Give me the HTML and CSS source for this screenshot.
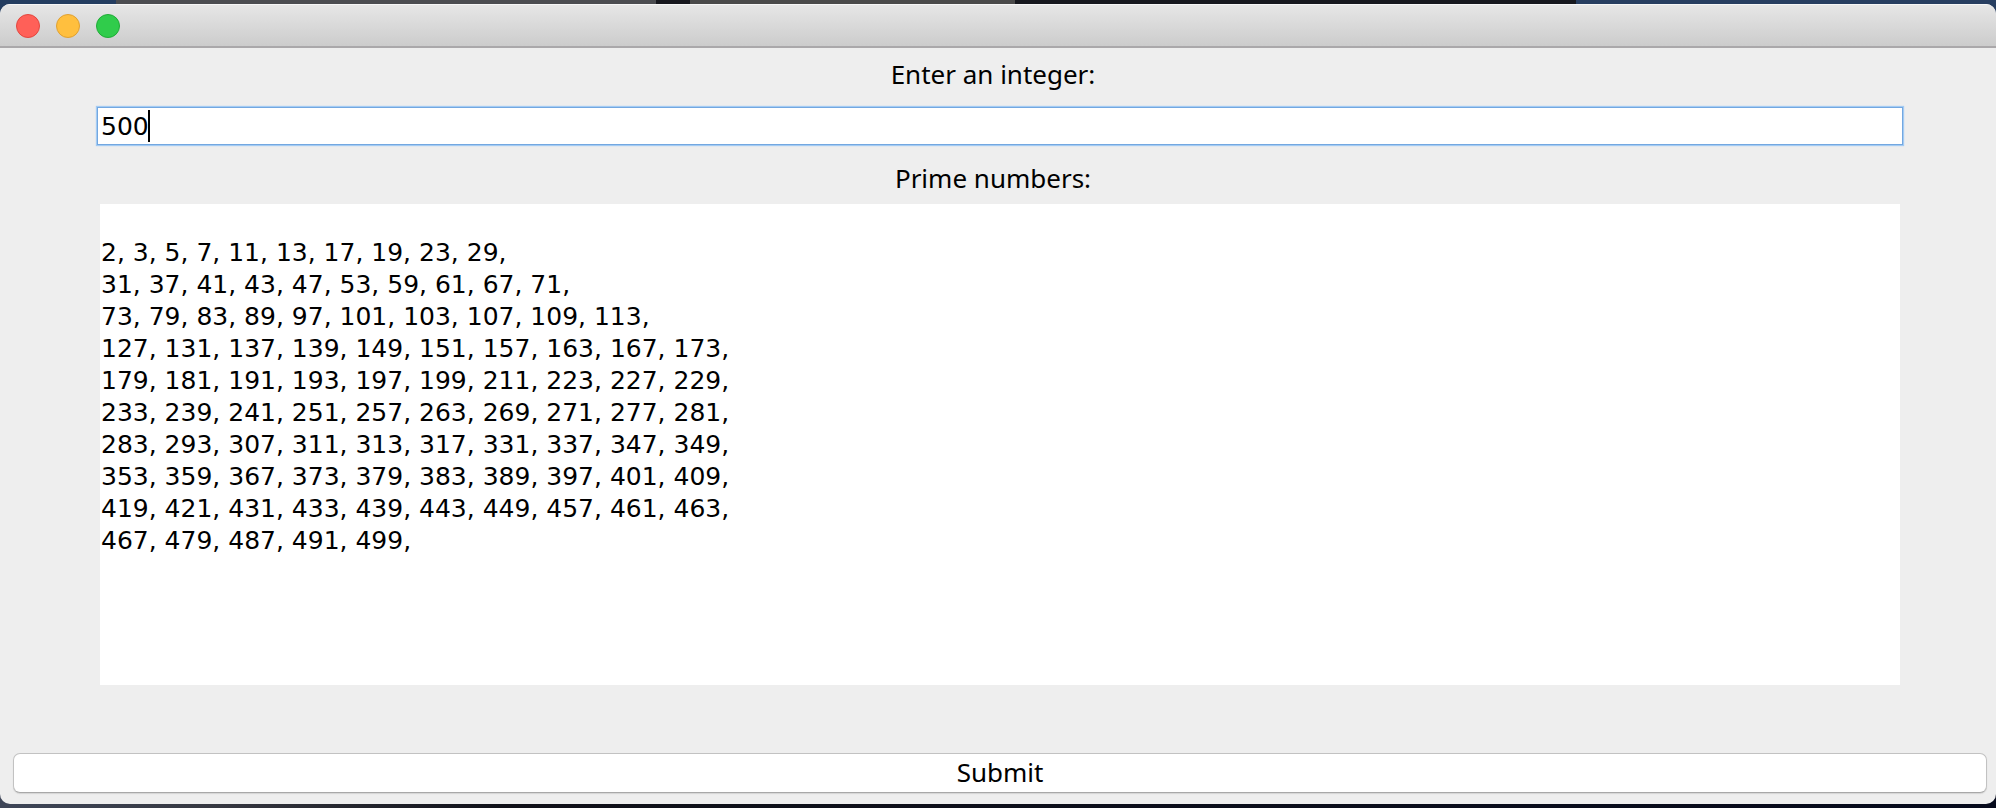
FILE: index.html
```
<!DOCTYPE html>
<html lang="en">
<head>
<meta charset="utf-8">
<title>Prime numbers</title>
<link rel="stylesheet" href="styles.css">
</head>
<body>
<main class="window">
  <header class="titlebar">
    <button class="light light-close" type="button" aria-label="Close"></button>
    <button class="light light-minimize" type="button" aria-label="Minimize"></button>
    <button class="light light-zoom" type="button" aria-label="Zoom"></button>
  </header>
  <form class="content">
    <div class="fields">
      <label class="caption" for="limit">Enter an integer:</label>
      <div class="entry">
        <input class="entry-input" id="limit" type="text" value="500">
        <span class="caret"></span>
      </div>
      <label class="caption" for="primes">Prime numbers:</label>
      <textarea class="output" id="primes" rows="15" readonly>

2, 3, 5, 7, 11, 13, 17, 19, 23, 29,
31, 37, 41, 43, 47, 53, 59, 61, 67, 71,
73, 79, 83, 89, 97, 101, 103, 107, 109, 113,
127, 131, 137, 139, 149, 151, 157, 163, 167, 173,
179, 181, 191, 193, 197, 199, 211, 223, 227, 229,
233, 239, 241, 251, 257, 263, 269, 271, 277, 281,
283, 293, 307, 311, 313, 317, 331, 337, 347, 349,
353, 359, 367, 373, 379, 383, 389, 397, 401, 409,
419, 421, 431, 433, 439, 443, 449, 457, 461, 463,
467, 479, 487, 491, 499,</textarea>
    </div>
    <button class="submit" type="button">Submit</button>
  </form>
</main>
</body>
</html>
```
FILE: styles.css
```
* {
  box-sizing: border-box;
}

body {
  margin: 0;
  min-height: 100vh;
  padding: 4px 0;
  display: flex;
  background:
    linear-gradient(90deg, #243d60 0 116px, #4b4c50 116px 656px, #16171d 656px 690px, #4a4a4a 690px 1015px, #16181e 1015px 1576px, #273e60 1576px) top / 100% 20px no-repeat,
    linear-gradient(90deg, #3e4658 0, #363841 220px, #101119 500px, #060a1c) #060a1c;
  color: #000;
  font-family: "Lucida Grande", "DejaVu Sans", sans-serif;
  font-size: 25px;
  line-height: 32px;
}

.window {
  flex: 1;
  display: flex;
  flex-direction: column;
  border-radius: 10px;
  overflow: hidden;
  background: #eeeeee;
}

.titlebar {
  display: flex;
  align-items: center;
  gap: 16px;
  height: 44px;
  padding: 0 16px;
  border-top: 1px solid #f6f6f6;
  border-bottom: 2px solid #aaa8aa;
  background: linear-gradient(#e6e6e6, #cccccc);
}

.light {
  width: 24px;
  height: 24px;
  padding: 0;
  border: 1px solid;
  border-radius: 50%;
}

.light-close {
  border-color: #e2473f;
  background: #ff6058;
}

.light-minimize {
  border-color: #dfa032;
  background: #ffbf3e;
}

.light-zoom {
  border-color: #20ab37;
  background: #30cc4b;
}

.content {
  flex: 1;
  display: flex;
  flex-direction: column;
  justify-content: space-between;
  padding: 10px 9px 11px 13px;
}

.fields {
  display: flex;
  flex-direction: column;
  padding: 0 84px;
}

.caption {
  padding-right: 14px;
  font-family: "Lucida Grande", "Noto Sans", sans-serif;
  font-size: 26px;
  text-align: center;
}

.entry {
  position: relative;
  display: flex;
  margin: 17px 0;
}

.entry-input {
  flex: 1;
  min-width: 0;
  height: 38px;
  padding: 1px 3px 0;
  border: 1px solid #73a7e0;
  outline: none;
  box-shadow: 0 0 1px 1px #a3cbf3;
  background: #fff;
  color: inherit;
  font: inherit;
}

.caret {
  position: absolute;
  top: 3px;
  left: 51px;
  width: 2px;
  height: 32px;
  background: #000;
}

.output {
  margin: 10px 3px 0;
  padding: 1px 0 0 1px;
  border: 0;
  outline: none;
  resize: none;
  overflow: hidden;
  background: #fff;
  color: inherit;
  font: inherit;
}

.submit {
  height: 40px;
  padding: 0 0 2px;
  border: 1px solid #c2c2c2;
  border-bottom-color: #a8a8a8;
  border-radius: 7px;
  box-shadow: 0 1px 1px #d4d4d4;
  background: #fff;
  color: inherit;
  font-family: "Lucida Grande", "Noto Sans", sans-serif;
  font-size: 26px;
  line-height: 32px;
}
```
